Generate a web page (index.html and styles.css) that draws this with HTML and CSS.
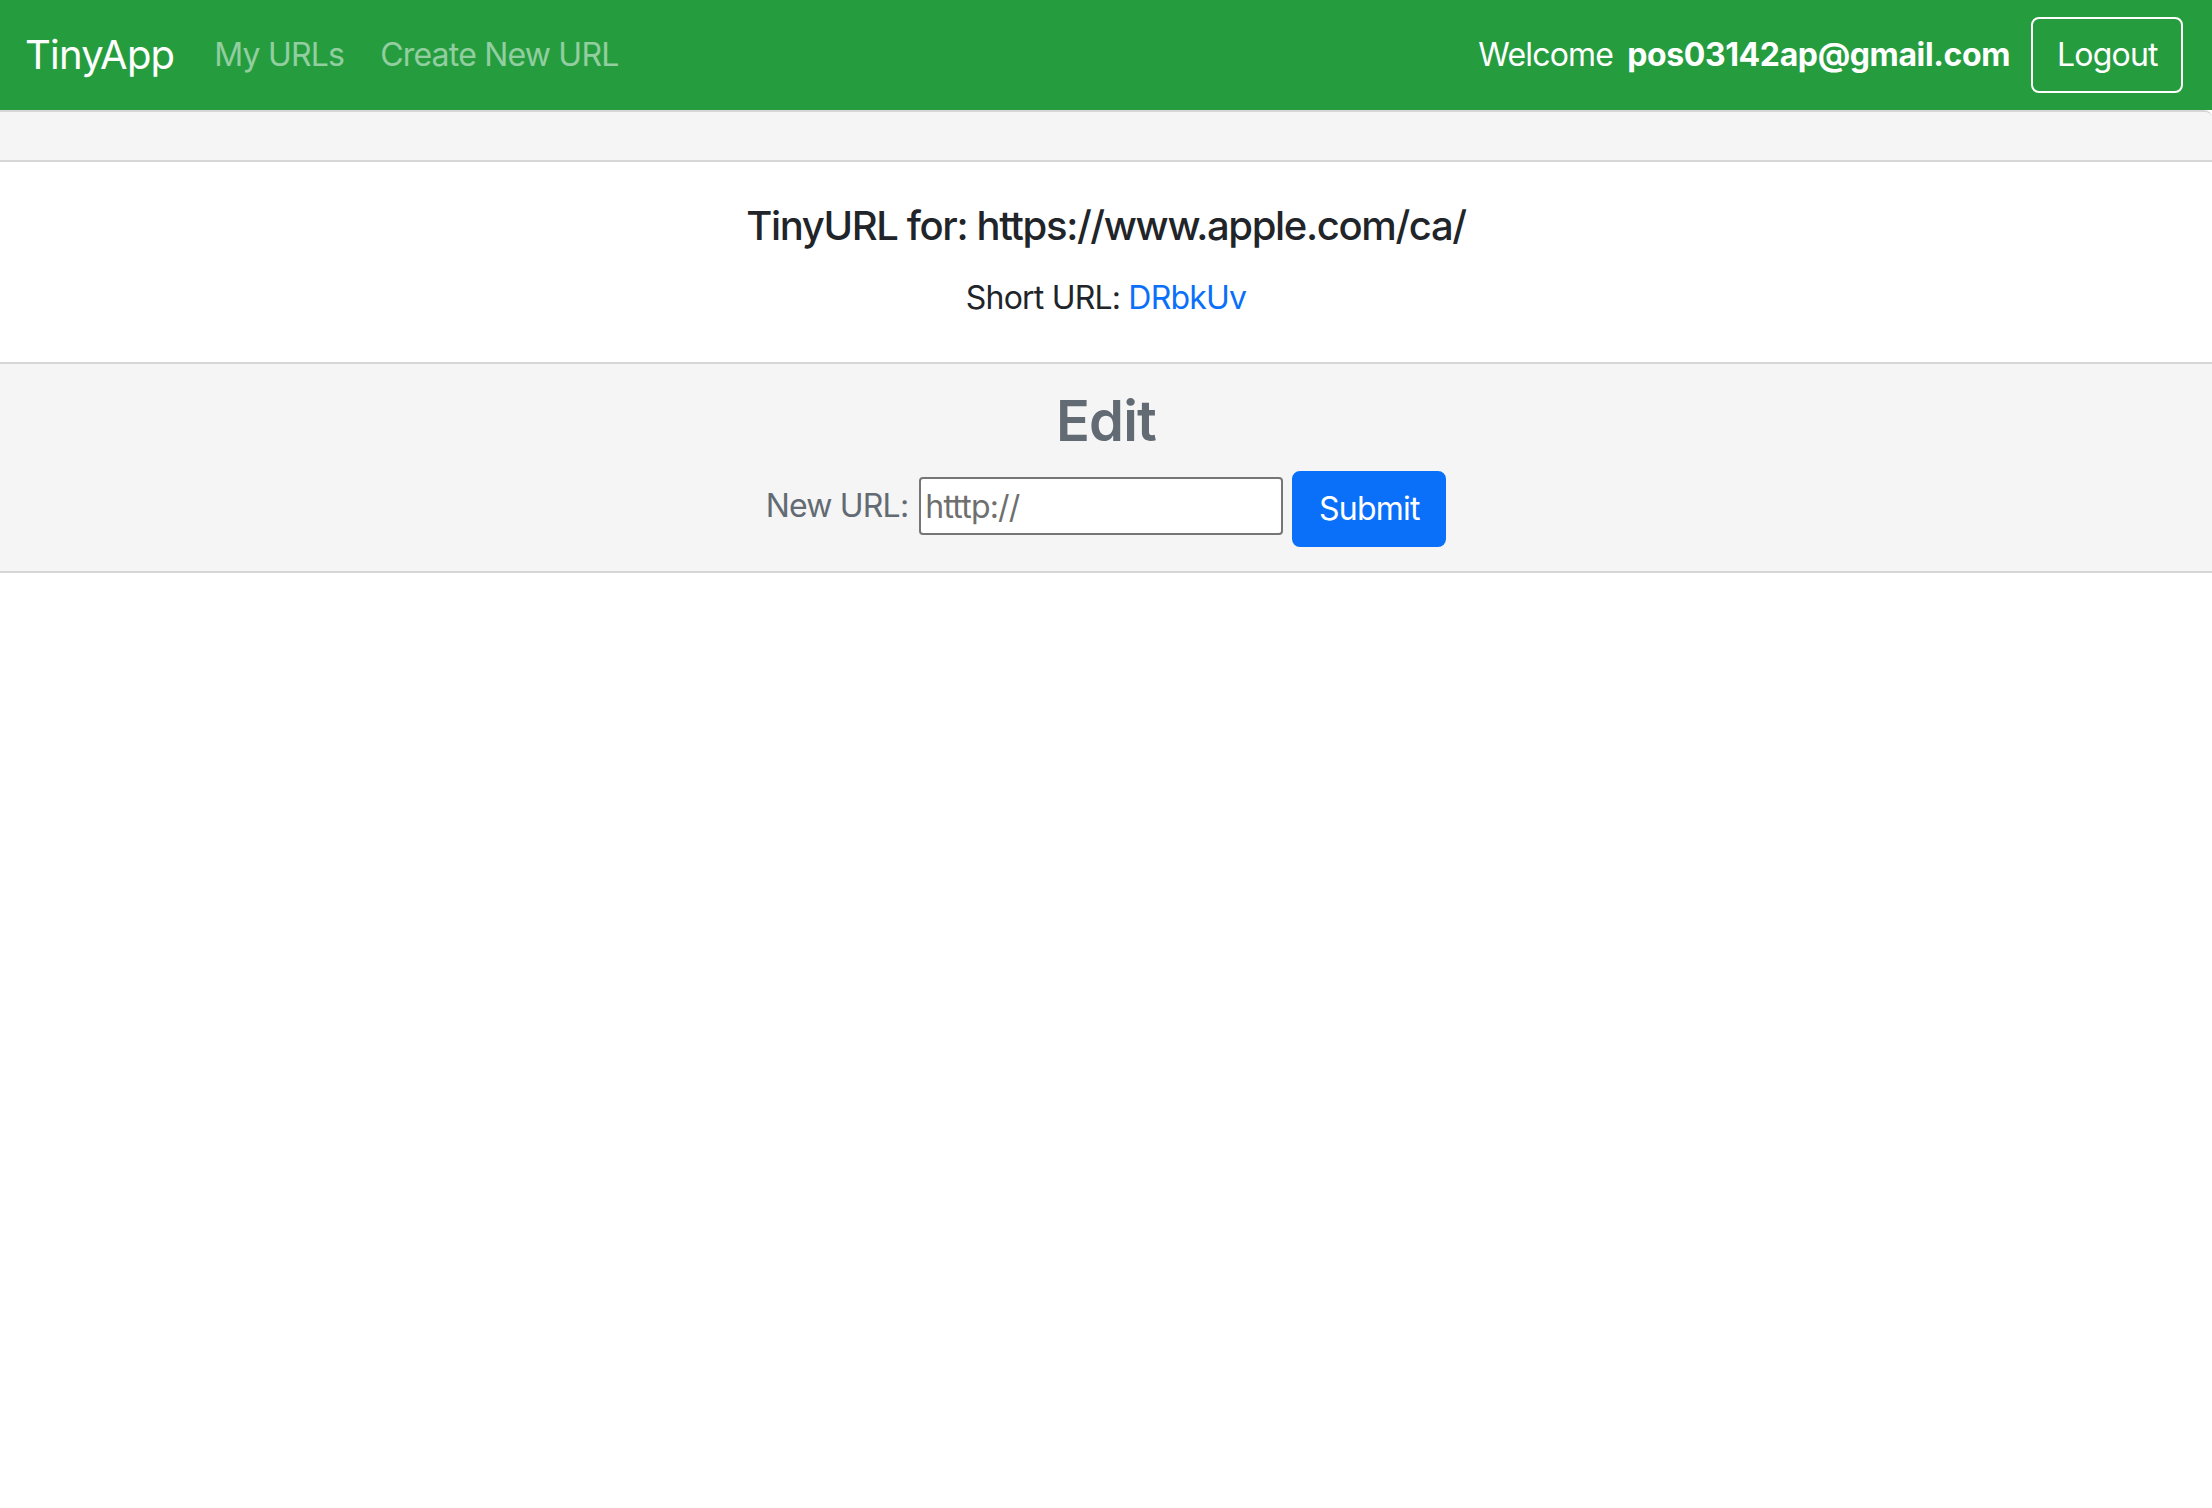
FILE: index.html
```html
<!DOCTYPE html>
<html lang="en">
<head>
<meta charset="utf-8">
<title>TinyApp</title>
<link rel="stylesheet" href="styles.css">
</head>
<body>
<nav class="navbar">
  <a class="brand" href="#">TinyApp</a>
  <div class="nav-links">
    <a class="nav-link" href="#">My URLs</a>
    <a class="nav-link" href="#">Create New URL</a>
  </div>
  <div class="nav-user">
    <span class="welcome">Welcome</span>
    <span class="email">pos03142ap@gmail.com</span>
    <button class="btn-logout" type="button">Logout</button>
  </div>
</nav>
<main class="card">
  <div class="card-header"></div>
  <div class="card-body">
    <h5 class="card-title">TinyURL for: https://www.apple.com/ca/</h5>
    <p class="card-text">Short URL: <a class="short-link" href="#">DRbkUv</a></p>
  </div>
  <div class="card-footer">
    <h3 class="edit-title">Edit</h3>
    <form class="edit-form">
      <label class="edit-label" for="newurl">New URL:</label>
      <input class="edit-input" id="newurl" type="text" placeholder="htttp://">
      <button class="btn-submit" type="button">Submit</button>
    </form>
  </div>
</main>
</body>
</html>
```

FILE: styles.css
```css
* { box-sizing: border-box; }

html, body {
  margin: 0;
  padding: 0;
  background: #ffffff;
}

body {
  font-family: Inter, "Liberation Sans", sans-serif;
  color: #212529;
  font-size: 32px;
  line-height: 1.5;
  letter-spacing: -0.025em;
}

a { text-decoration: none; }

.navbar {
  display: flex;
  align-items: center;
  height: 110px;
  padding: 0 29px 0 25px;
  background: #259d3f;
}

.brand {
  color: #ffffff;
  font-size: 40px;
  line-height: 60px;
  margin-right: 40px;
}

.nav-links {
  display: flex;
  gap: 36px;
}

.nav-link {
  color: rgba(255, 255, 255, 0.5);
  font-size: 32px;
  line-height: 48px;
}

.nav-user {
  margin-left: auto;
  display: flex;
  align-items: center;
  color: #ffffff;
}

.welcome { margin-right: 14px; }

.email {
  font-weight: 700;
  letter-spacing: -0.012em;
  margin-right: 21px;
}

.btn-logout {
  font-family: inherit;
  font-size: 32px;
  line-height: 48px;
  letter-spacing: -0.025em;
  color: #ffffff;
  background: transparent;
  border: 2px solid #ffffff;
  border-radius: 8px;
  padding: 12px 24px;
  width: 152px;
}

.card {
  display: flex;
  flex-direction: column;
  border-top: 2px solid #d6d6d6;
  border-top-right-radius: 8px;
  overflow: hidden;
}

.card-header {
  height: 50px;
  background: #f5f5f5;
  border-bottom: 2px solid #d6d6d6;
}

.card-body {
  padding: 40px;
  text-align: center;
  border-bottom: 2px solid #d6d6d6;
}

.card-title {
  margin: 0 0 24px;
  font-size: 40px;
  font-weight: 500;
  line-height: 1.2;
  letter-spacing: -0.034em;
}

.card-text {
  margin: 0;
  font-size: 32px;
  line-height: 48px;
}

.short-link { color: #0a70fa; }

.card-footer {
  background: #f5f5f5;
  padding: 24px 40px;
  border-bottom: 2px solid #d6d6d6;
  text-align: center;
}

.edit-title {
  margin: 0 0 16px;
  font-size: 56px;
  font-weight: 600;
  line-height: 1.2;
  color: #626a73;
}

.edit-form {
  display: flex;
  justify-content: center;
  align-items: center;
}

.edit-label {
  color: #626a73;
  margin-right: 11px;
  margin-bottom: 6px;
}

.edit-input {
  width: 364px;
  height: 58px;
  margin-bottom: 6px;
  margin-right: 9px;
  padding: 0 4px;
  font-family: inherit;
  font-size: 32px;
  letter-spacing: -0.025em;
  color: #212529;
  background: #ffffff;
  border: 2px solid #767676;
  border-radius: 4px;
}

.edit-input::placeholder { color: #6f6f6f; }

.btn-submit {
  font-family: inherit;
  font-size: 32px;
  line-height: 48px;
  letter-spacing: -0.025em;
  color: #ffffff;
  background: #0a70fa;
  border: 2px solid #0a70fa;
  border-radius: 8px;
  padding: 12px 24px;
  width: 154px;
}
```
